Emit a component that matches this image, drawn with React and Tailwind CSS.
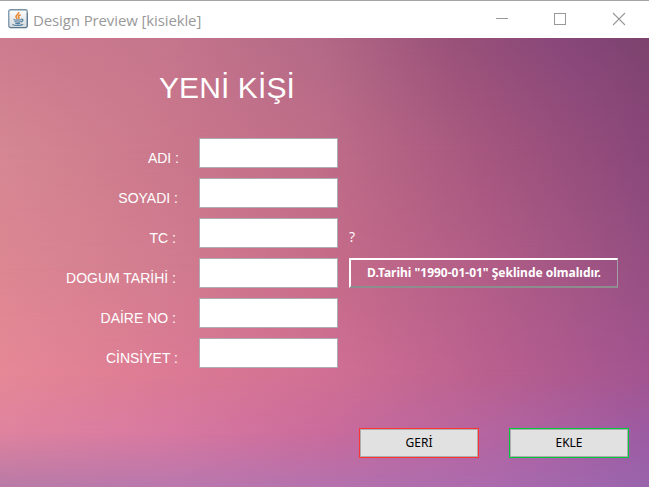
import React from "react";

const fields = [
  { label: "ADI :", pad: "pr-[20px]" },
  { label: "SOYADI :", pad: "pr-[21px]" },
  { label: "TC :", pad: "pr-[23px]", hint: "?" },
  { label: "DOGUM TARİHİ :", pad: "pr-[23px]", note: 'D.Tarihi "1990-01-01" Şeklinde olmalıdır.' },
  { label: "DAİRE NO :", pad: "pr-[23px]" },
  { label: "CİNSİYET :", pad: "pr-[21px]" },
];

function JavaIcon() {
  return (
    <svg width="20" height="20" viewBox="0 0 20 20" fill="none">
      <defs>
        <linearGradient id="tile" x1="0" y1="0" x2="0" y2="1">
          <stop offset="0" stopColor="#fdfdfd" />
          <stop offset="1" stopColor="#d5dade" />
        </linearGradient>
      </defs>
      <rect x="0.75" y="0.75" width="18.5" height="17.8" rx="1.8" fill="url(#tile)" stroke="#7893a8" strokeWidth="1.3" />
      <path d="M1.5 18.6h17l.8-1.2V4" stroke="#536f86" strokeWidth="0.9" />
      <path d="M10.7 3c.7 2-3.3 3.2-2.7 5 .2.8 1 1.300 1.200 2M12.700 5.700c-2.300.8-2.800 1.700-1.900 2.700.5.7.2 1.300-.4 1.700" stroke="#e98732" strokeWidth="1.5" />
      <path d="M5.500 10.500c1.500.8 6.500.8 8.200 0M6.500 12.500c2 .7 5 .7 6.500 0M7.200 14.200c1.600.5 3.800.5 5 0M13.300 10.200c2.500-.3 2.100 2.200-.4 2.700M4.500 15.500c2 1.300 8.500 1.300 10.600-.2" stroke="#55809f" strokeWidth="1.200" />
    </svg>
  );
}

function TitleBar() {
  return (
    <header className="flex h-[38px] shrink-0 items-start border-t border-[#a5a5a5] bg-white pl-2">
      <div className="pt-2">
        <JavaIcon />
      </div>
      <h1 className="ml-[5px] mt-[7px] grow font-['Open_Sans','Noto_Sans',sans-serif] text-[15px] leading-[24px] tracking-[-0.12px] whitespace-nowrap text-[#999999]">
        Design Preview [kisiekle]
      </h1>
      <svg className="shrink-0" width="153" height="37" viewBox="0 0 153 37" fill="none" stroke="#999999" shapeRendering="crispEdges">
        <path d="M0 17.500h12" />
        <rect x="58.500" y="12.500" width="11" height="11" />
        <path d="M117 12l12 12M129 12l-12 12" shapeRendering="auto" strokeWidth="1.100" />
      </svg>
    </header>
  );
}

function Backdrop() {
  return (
    <div className="absolute inset-0">
      <div className="absolute inset-0 bg-[linear-gradient(90deg,#cd7b8f_0%,#c6768d_25%,#b36986_50%,#995179_70%,#87477a_88%,#7d436e_100%)]" />
      <div className="absolute inset-0 bg-[linear-gradient(90deg,#d58792_0%,#cb788c_25%,#bf6d88_50%,#a5567e_75%,#89477a_100%)] [mask-image:linear-gradient(transparent_0%,black_25%)]" />
      <div className="absolute inset-0 bg-[linear-gradient(90deg,#dc8792_0%,#d27d90_25%,#c66c89_50%,#b15d87_75%,#954f82_100%)] [mask-image:linear-gradient(transparent_25%,black_50%)]" />
      <div className="absolute inset-0 bg-[linear-gradient(90deg,#e68896_0%,#dc7b94_25%,#d17093_50%,#ba608f_75%,#a25490_100%)] [mask-image:linear-gradient(transparent_50%,black_75%)]" />
      <div className="absolute inset-0 bg-[linear-gradient(90deg,#df839f_0%,#d879a1_25%,#ca6b9c_50%,#b565a0_75%,#9c5ba2_100%)] [mask-image:linear-gradient(transparent_75%,black_88%)]" />
      <div className="absolute inset-0 bg-[linear-gradient(90deg,#b87aa6_0%,#b978ad_25%,#b471ad_50%,#ab6aad_75%,#9964ac_100%)] [mask-image:linear-gradient(transparent_88%,black_100%)]" />
    </div>
  );
}

export default function App() {
  return (
    <div className="flex h-[487px] w-[649px] flex-col overflow-hidden">
      <TitleBar />
      <main className="relative grow">
        <Backdrop />
        <div className="relative flex h-full flex-col font-['Liberation_Sans',Arial,sans-serif] text-white">
          <h2 className="mt-[31px] ml-[159px] h-[69px] text-[30px] leading-[38px] tracking-[0.1px] whitespace-nowrap">
            YENİ KİŞİ
          </h2>
          <form className="flex flex-col gap-[10px]">
            {fields.map((f) => (
              <div key={f.label} className="flex h-[30px]">
                <label className={`w-[199px] pt-[12px] text-right text-[14px] leading-[16px] whitespace-nowrap ${f.pad}`}>
                  {f.label}
                </label>
                <input aria-label={f.label} className="h-[30px] w-[139px] border border-[#abadb3] bg-white outline-none" />
                {f.hint && (
                  <span className="ml-[11px] pt-[11px] font-['Open_Sans','Noto_Sans',sans-serif] text-[14px] leading-[16px]">
                    {f.hint}
                  </span>
                )}
                {f.note && (
                  <div className="ml-[11px] flex h-[30px] w-[269px] items-center justify-center border-t-2 border-r border-b-2 border-l-2 border-t-white border-r-[#a0a0a0] border-b-[#8d8d8d] border-l-white font-['Noto_Sans','DejaVu_Sans',sans-serif] text-[12px] font-bold whitespace-nowrap">
                    {f.note}
                  </div>
                )}
              </div>
            ))}
          </form>
          <div className="mt-[60px] ml-[359px] flex gap-[30px] font-['Noto_Sans','DejaVu_Sans',sans-serif] text-[12px] text-black">
            <button className="h-[30px] w-[120px] border border-[#ff3333] bg-[#e1e1e1] shadow-[inset_0_0_0_1px_#adadad]">GERİ</button>
            <button className="h-[30px] w-[120px] border border-[#00c83c] bg-[#e1e1e1] shadow-[inset_0_0_0_1px_#adadad]">EKLE</button>
          </div>
        </div>
      </main>
    </div>
  );
}
